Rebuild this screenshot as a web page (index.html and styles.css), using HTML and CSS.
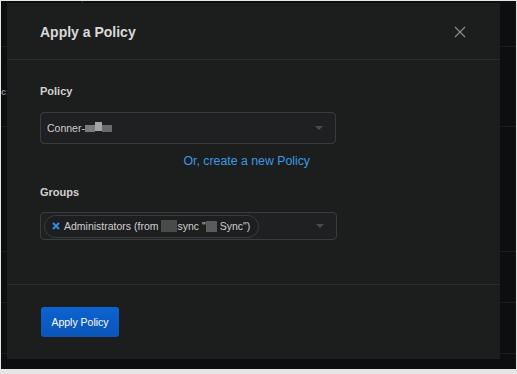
FILE: index.html
```html
<!DOCTYPE html>
<html>
<head>
<meta charset="utf-8">
<link rel="stylesheet" href="styles.css">
</head>
<body>
<div class="screen">
  <div class="backdrop">
    <div class="bg-row bg-top"><span class="bg-col"></span></div>
    <div class="bg-row bg-r1"><span class="bg-clip">c:</span></div>
    <div class="bg-row bg-r2"></div>
    <div class="bg-row bg-r3"></div>
    <div class="bg-row bg-r4"></div>
    <div class="bg-row bg-r5"></div>
  </div>
  <div class="modal">
    <div class="modal-header">
      <h2 class="modal-title">Apply a Policy</h2>
      <svg class="close" width="12" height="12" viewBox="0 0 12 12"><path d="M1 1L11 11M11 1L1 11" stroke="#8c8c8c" stroke-width="1.2" fill="none"/></svg>
    </div>
    <div class="modal-body">
      <div class="label label-policy">Policy</div>
      <div class="select select-policy">
        <span class="value">Conner-<span class="redact r1"></span><span class="redact r2"></span><span class="redact r3"></span></span>
        <span class="caret"></span>
      </div>
      <div class="link-row"><a class="link">Or, create a new Policy</a></div>
      <div class="label label-groups">Groups</div>
      <div class="select select-groups">
        <span class="pill">
          <svg class="pill-x" width="8" height="8" viewBox="0 0 8 8"><path d="M1 1L7 7M7 1L1 7" stroke="#2f8ee6" stroke-width="2" fill="none"/></svg>
          <span class="pill-text">Administrators (from<span class="redact r4"></span>sync "<span class="redact r5"></span>&nbsp;Sync")</span>
        </span>
        <span class="caret"></span>
      </div>
    </div>
    <div class="modal-footer">
      <button class="btn">Apply Policy</button>
    </div>
  </div>
</div>
</body>
</html>
```
FILE: styles.css
```css
html, body {
  margin: 0;
  padding: 0;
}
body {
  width: 517px;
  height: 374px;
  background: #e6e6e6;
  font-family: "Liberation Sans", Arial, sans-serif;
  overflow: hidden;
}
.screen {
  position: relative;
  margin: 1px 1px 0 1px;
  height: 368px;
  background: #0c0e0f;
  overflow: hidden;
}
.backdrop {
  display: flex;
  flex-direction: column;
}
.bg-row {
  border-bottom: 1px solid #1a1c1d;
  box-sizing: border-box;
  position: relative;
}
.bg-top { height: 46px; }
.bg-r1 { height: 80px; display: flex; align-items: center; }
.bg-r2 { height: 125px; }
.bg-r3 { height: 51px; }
.bg-r4 { height: 51px; }
.bg-r5 { height: 15px; border-bottom: none; }
.bg-col {
  display: block;
  margin-left: 81px;
  width: 1px;
  height: 3px;
  background: #2a2c2d;
}
.bg-clip {
  margin-left: 0;
  margin-top: 10px;
  color: #8a8a8a;
  font-size: 9px;
  font-weight: bold;
}
.modal {
  position: absolute;
  left: 6px;
  top: 2px;
  width: 493px;
  height: 356px;
  background: #1c1d1d;
  display: flex;
  flex-direction: column;
}
.modal-header {
  border-bottom: 1px solid #2b2c2d;
  display: flex;
  align-items: center;
  justify-content: space-between;
  padding: 2px 33px 0 33px;
  box-sizing: content-box;
  height: 54px;
}
.modal-title {
  margin: 0;
  font-size: 14px;
  font-weight: bold;
  color: #d9d9d9;
}
.close {
  margin-right: 1px;
  margin-top: -1px;
}
.modal-body {
  padding: 24px 33px 0 33px;
  height: 200px;
  border-bottom: 1px solid #2b2c2d;
}
.label {
  font-size: 11px;
  font-weight: bold;
  color: #d2d2d2;
  line-height: 14px;
}
.select {
  width: 296px;
  box-sizing: border-box;
  border: 1px solid #3b3c3d;
  border-radius: 4px;
  background: #1f2021;
  display: flex;
  align-items: center;
  justify-content: space-between;
}
.select-policy {
  margin-top: 14px;
  height: 32px;
  padding: 0 12px 0 6px;
}
.select-groups {
  margin-top: 13px;
  height: 28px;
  width: 297px;
  padding: 0 12px 0 3px;
}
.value {
  font-size: 10.5px;
  color: #cfcfcf;
  display: flex;
  align-items: center;
}
.redact {
  display: inline-block;
  height: 7px;
  background: #6c6c6c;
  vertical-align: middle;
}
.r1 { width: 10px; background: #7a7a7a; }
.r2 { width: 7px; height: 9px; background: #a4a4a4; margin-top: -3px; }
.r3 { width: 10px; background: #6b6b6b; }
.r4 { width: 16px; height: 12px; background: #4a4a4a; margin: 0 1px 0 2px; }
.r5 { width: 11px; height: 11px; background: #5b5b5b; }
.caret {
  width: 0;
  height: 0;
  border-left: 4px solid transparent;
  border-right: 4px solid transparent;
  border-top: 4px solid #4b4c4d;
}
.link-row {
  width: 296px;
  text-align: right;
  padding-top: 8px;
  box-sizing: border-box;
  padding-right: 26px;
  line-height: 16px;
}
.link {
  color: #3a9ae4;
  font-size: 12.3px;
}
.label-groups {
  margin-top: 16px;
}
.pill {
  height: 23px;
  box-sizing: border-box;
  border: 1px solid #3a3b3c;
  border-radius: 12px;
  background: #1d1e1f;
  display: flex;
  align-items: center;
  padding: 0 8px 0 7px;
  gap: 4px;
}
.pill-x {
  flex-shrink: 0;
}
.pill-text {
  font-size: 10.5px;
  color: #d0d0d0;
  white-space: nowrap;
  display: flex;
  align-items: center;
}
.modal-footer {
  flex: 1;
  padding: 22px 34px;
  box-sizing: border-box;
}
.btn {
  width: 78px;
  height: 30px;
  border: none;
  border-radius: 3px;
  background: linear-gradient(#0c63d0, #0a55b8);
  color: #ffffff;
  font-family: "Liberation Sans", Arial, sans-serif;
  font-size: 10.5px;
  padding: 0;
}
```
